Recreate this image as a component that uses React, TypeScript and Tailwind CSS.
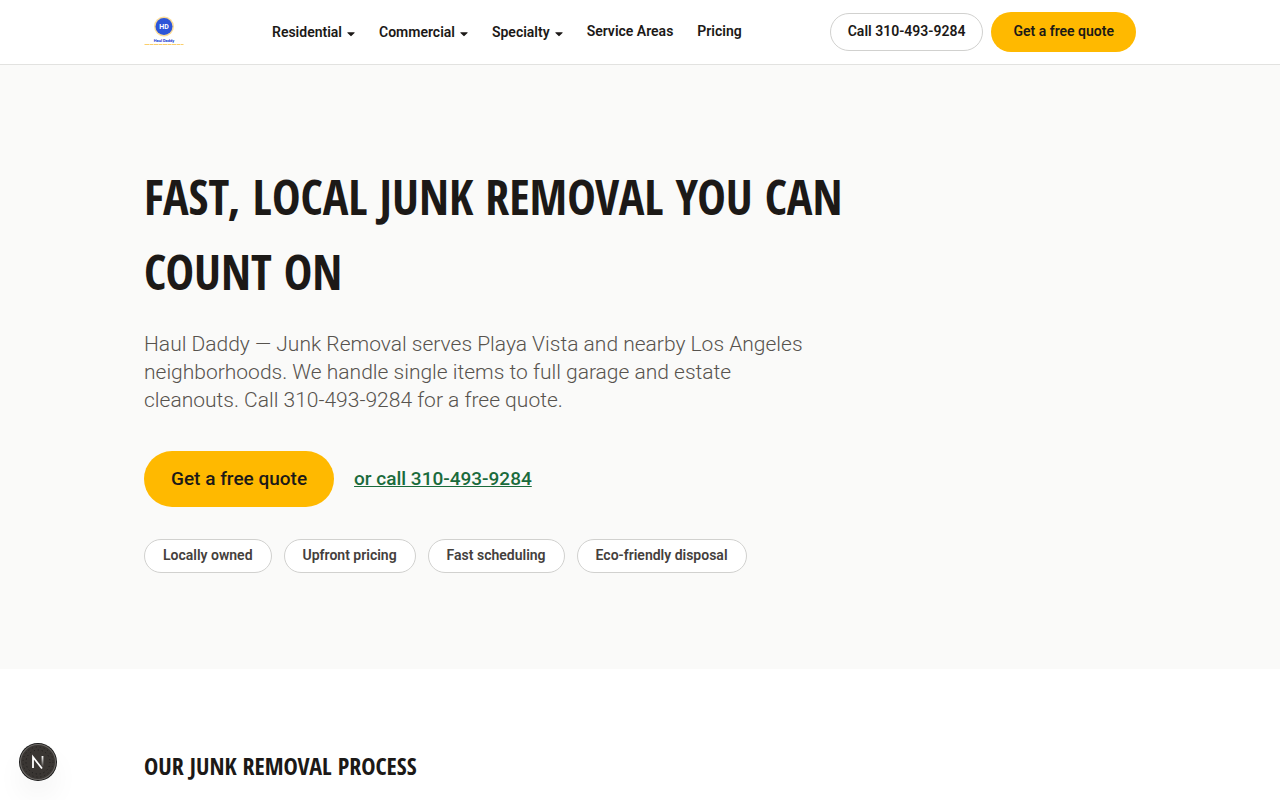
import type { ReactNode } from 'react';

const dropdowns = ['Residential', 'Commercial', 'Specialty'];
const links = ['Service Areas', 'Pricing'];
const badges = ['Locally owned', 'Upfront pricing', 'Fast scheduling', 'Eco-friendly disposal'];

function Logo() {
  return (
    <svg viewBox="0 0 40 40" className="size-10" role="img" aria-label="Haul Daddy">
      <circle cx="20" cy="14.5" r="10" fill="#fbdc98" />
      <circle cx="20" cy="14.5" r="8.5" fill="#2d55d8" />
      <text x="20" y="17" textAnchor="middle" fontSize="7" fontWeight="700" fill="#ffffff">
        HD
      </text>
      <text x="20" y="30" textAnchor="middle" fontSize="4" fontWeight="700" fill="#1236d0">
        Haul Daddy
      </text>
      <path d="M0.5 32.5h39" stroke="#fbcf6b" strokeWidth="1" strokeDasharray="5 .5 3 .5" />
    </svg>
  );
}

function Caret() {
  return (
    <svg viewBox="0 0 8 5" className="mt-1 h-[5px] w-2" fill="currentColor" aria-hidden="true">
      <path d="M.9.3h6.2c.5 0 .7.4.4.7L4.6 3.8a.8.8 0 0 1-1.2 0L.5 1C.2.7.4.3.9.3Z" />
    </svg>
  );
}

function Badge({ children }: { children: ReactNode }) {
  return (
    <li className="rounded-full border border-[#d1d1cf] bg-white px-[18px] pt-[5px] pb-[7px] text-sm font-semibold text-[#44403c]">
      {children}
    </li>
  );
}

export default function App() {
  return (
    <div className="min-h-screen bg-white font-['Roboto',sans-serif] text-[#1c1917]">
      <header className="border-b border-[#e2e2e0] bg-white">
        <div className="mx-auto flex h-16 max-w-5xl items-center justify-between px-4">
          <a href="#home">
            <Logo />
          </a>
          <nav className="flex items-center gap-6 text-sm font-semibold">
            {dropdowns.map((label) => (
              <button key={label} type="button" className="flex items-center gap-[5px]">
                {label}
                <Caret />
              </button>
            ))}
            {links.map((label) => (
              <a key={label} href="#" className="pb-0.5">
                {label}
              </a>
            ))}
          </nav>
          <div className="flex items-center gap-2 text-sm font-semibold">
            <a
              href="tel:3104939284"
              className="rounded-full border border-[#d1d1cf] bg-white px-[17px] pt-[7px] pb-[9px]"
            >
              Call 310-493-9284
            </a>
            <a href="#quote" className="rounded-full bg-[#ffb900] px-[22px] pt-[9px] pb-[11px]">
              Get a free quote
            </a>
          </div>
        </div>
      </header>

      <main>
        {/* Hero */}
        <section className="bg-[#fafaf9] pt-[94px] pb-24">
          <div className="mx-auto max-w-5xl px-4">
            <h1 className="max-w-3xl font-['Open_Sans_Condensed','Noto_Sans_Condensed','Roboto_Condensed',sans-serif] text-5xl leading-[75px] font-bold uppercase">
              Fast, local junk removal you can count on
            </h1>
            <p className="mt-[21px] mb-[37px] max-w-2xl text-[21px] leading-7 font-light text-[#57534e]">
              Haul Daddy — Junk Removal serves Playa Vista and nearby Los Angeles neighborhoods. We
              handle single items to full garage and estate cleanouts. Call 310-493-9284 for a free
              quote.
            </p>
            <div className="flex items-center gap-5 text-[19px] leading-7 font-medium">
              <a href="#quote" className="rounded-full bg-[#ffb900] px-[27px] py-3.5">
                Get a free quote
              </a>
              <a href="tel:3104939284" className="text-[#1a6b3c] underline">
                or call 310-493-9284
              </a>
            </div>
            <ul className="mt-8 flex flex-wrap gap-3">
              {badges.map((badge) => (
                <Badge key={badge}>{badge}</Badge>
              ))}
            </ul>
          </div>
        </section>

        {/* Process */}
        <section className="bg-white pt-[79px]">
          <div className="mx-auto max-w-5xl px-4">
            <h2 className="font-['Open_Sans_Condensed','Noto_Sans_Condensed','Roboto_Condensed',sans-serif] text-2xl leading-9 font-bold uppercase">
              Our junk removal process
            </h2>
          </div>
        </section>
      </main>

      {/* Dev tools button */}
      <button
        type="button"
        aria-label="Open dev tools"
        className="fixed bottom-5 left-5 flex size-9 items-center justify-center rounded-full bg-[#3a3633] shadow-[0_0_0_1px_#171717,inset_0_0_0_1px_#6b6865,0_16px_32px_-8px_rgba(0,0,0,0.16)]"
      >
        <svg viewBox="0 0 36 36" className="size-9" fill="none" aria-hidden="true">
          <defs>
            <linearGradient id="stem" x1="0" y1="12" x2="0" y2="23" gradientUnits="userSpaceOnUse">
              <stop stopColor="#ffffff" />
              <stop offset="1" stopColor="#ffffff" stopOpacity="0" />
            </linearGradient>
          </defs>
          <circle cx="18" cy="18" r="12" stroke="#1c1a19" strokeDasharray="1 3" />
          <circle cx="18" cy="18" r="15" stroke="#24211f" strokeDasharray="1 3" />
          <path d="M13 24V13l9 11.5" stroke="#ffffff" strokeWidth="1.8" />
          <path d="M22.5 12v11" stroke="url(#stem)" strokeWidth="1.8" />
        </svg>
      </button>
    </div>
  );
}
